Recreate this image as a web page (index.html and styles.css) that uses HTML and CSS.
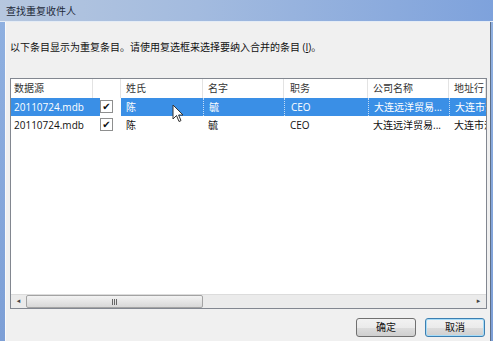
FILE: index.html
```html
<!DOCTYPE html>
<html>
  <head>
    <meta charset="utf-8" />
    <title>查找重复收件人</title>
    <link rel="stylesheet" href="styles.css">
  </head>

  <body>
    <div class="window">
      <div class="titlebar">查找重复收件人</div>
      <div class="frame">
        <div class="dialog">
          <p class="hint">以下条目显示为重复条目。请使用复选框来选择要纳入合并的条目 (<u>I</u>)。</p>

          <div class="list">
            <div class="row head">
              <div class="cell c-src">数据源</div>
              <div class="cell c-chk"></div>
              <div class="cell c-name">姓氏</div>
              <div class="cell c-first">名字</div>
              <div class="cell c-job">职务</div>
              <div class="cell c-co">公司名称</div>
              <div class="cell c-addr">地址行</div>
            </div>
            <div class="row selected">
              <div class="cell c-src">20110724.mdb</div>
              <div class="cell c-chk"><span class="check">&#10004;</span></div>
              <div class="cell c-name">陈</div>
              <div class="cell c-first">毓</div>
              <div class="cell c-job">CEO</div>
              <div class="cell c-co">大连远洋贸易...</div>
              <div class="cell c-addr">大连市沙</div>
              <svg class="cursor" width="12" height="19" viewBox="0 0 12 19">
                <path d="M1 1 L1 15 L4.5 11.5 L7 17.5 L9 16.6 L6.6 11 L11 11 Z" fill="#fff" stroke="#333" stroke-width="1"/>
              </svg>
            </div>
            <div class="row">
              <div class="cell c-src">20110724.mdb</div>
              <div class="cell c-chk"><span class="check">&#10004;</span></div>
              <div class="cell c-name">陈</div>
              <div class="cell c-first">毓</div>
              <div class="cell c-job">CEO</div>
              <div class="cell c-co">大连远洋贸易...</div>
              <div class="cell c-addr">大连市沙</div>
            </div>
            <div class="filler"></div>
            <div class="hscroll">
              <div class="arrow">&#9666;</div>
              <div class="track">
                <div class="thumb"><span class="grip"></span></div>
              </div>
              <div class="arrow">&#9656;</div>
            </div>
          </div>

          <div class="buttons">
            <button class="btn">确定</button>
            <button class="btn focus">取消</button>
          </div>
        </div>
      </div>
    </div>
  </body>
</html>
```

FILE: styles.css
```css
* {
  font-family: 'Open Sans', 'Noto Sans CJK SC', sans-serif;
  box-sizing: border-box;
}

html,
body {
  margin: 0;
  padding: 0;
  overflow: hidden;
  background-color: #f0f0f0;
}

.window {
  width: 493px;
  height: 341px;
  display: flex;
  flex-direction: column;
}

.titlebar {
  height: 22px;
  padding: 4px 0 0 6px;
  font-size: 10px;
  line-height: 14px;
  color: #1e2a3a;
  background: linear-gradient(to right, #b6c7df 0%, #a3bbdf 40%, #7ea2dc 100%);
  border-bottom: 1px solid #e4ecf6;
}

.frame {
  flex: 1;
  min-height: 0;
  display: flex;
  padding: 0 2px 0 5px;
  background: linear-gradient(#8fb0e0, #7d9fd6);
}

.dialog {
  flex: 1;
  min-width: 0;
  display: flex;
  flex-direction: column;
  background-color: #f0f0f0;
  border-left: 1px solid #fafafa;
  border-right: 1px solid #5d6e88;
  padding: 0 3px 0 4px;
}

.hint {
  margin: 18px 0 0 0;
  height: 14px;
  font-size: 10px;
  line-height: 14px;
  color: #111;
  white-space: nowrap;
}

.list {
  margin-top: 24px;
  height: 231px;
  min-width: 0;
  display: flex;
  flex-direction: column;
  background-color: #fff;
  border: 1px solid #828790;
  overflow: hidden;
}

.row {
  position: relative;
  display: flex;
  height: 18px;
  font-size: 10px;
  line-height: 18px;
  color: #111;
  white-space: nowrap;
}

.row.head {
  height: 19px;
  color: #333;
}

.row.head .cell {
  border-right: 1px solid #e3e3e3;
}

.row.selected {
  background-color: #3a8fe6;
  color: #fff;
}

.row.selected .cell {
  border-left: 1px dotted #c4dcf6;
}

.row.selected .cell.c-src,
.row.selected .cell.c-chk,
.row.selected .cell.c-name {
  border-left: 0;
}

.cell {
  overflow: hidden;
  flex-shrink: 0;
  padding-left: 5px;
}

.c-src { width: 82px; padding-left: 3px; }
.c-chk { width: 28px; padding-left: 7px; }
.c-name { width: 82px; }
.c-first { width: 81px; }
.c-job { width: 84px; padding-left: 6px; }
.c-co { width: 81px; }
.c-addr { flex: 1; flex-shrink: 1; }

.row.selected .c-chk {
  background: linear-gradient(to right, #3a8fe6 7px, #fff 7px);
}

.row.selected .c-name {
  border-left: 1px solid #fff;
}

.check {
  display: inline-block;
  width: 13px;
  height: 13px;
  margin-top: 2px;
  border: 1px solid #8e8f8f;
  background-color: #fff;
  color: #111;
  font-family: 'DejaVu Sans', sans-serif;
  font-size: 10px;
  line-height: 11px;
  text-align: center;
  vertical-align: top;
}

.cursor {
  position: absolute;
  left: 161px;
  top: 6px;
  z-index: 2;
}

.filler {
  flex: 1;
}

.hscroll {
  height: 14px;
  display: flex;
  background-color: #ebebeb;
  border-top: 1px solid #dcdcdc;
}

.arrow {
  width: 15px;
  font-size: 7px;
  line-height: 13px;
  text-align: center;
  color: #444;
  font-family: 'DejaVu Sans', sans-serif;
}

.track {
  flex: 1;
  display: flex;
}

.thumb {
  width: 177px;
  height: 13px;
  border: 1px solid #a3a3a3;
  border-radius: 2px;
  background: linear-gradient(#f3f3f3, #d8d8d8);
  display: flex;
  justify-content: center;
  align-items: center;
}

.grip {
  width: 5px;
  height: 6px;
  border-left: 1px solid #666;
  border-right: 1px solid #666;
  position: relative;
}

.grip::after {
  content: '';
  position: absolute;
  left: 1px;
  top: 0;
  width: 1px;
  height: 6px;
  background-color: #666;
}

.buttons {
  display: flex;
  justify-content: flex-end;
  gap: 9px;
  margin-top: 9px;
  padding-right: 2px;
}

.btn {
  width: 60px;
  height: 19px;
  padding: 0;
  font-size: 10px;
  line-height: 17px;
  color: #111;
  border: 1px solid #707070;
  border-radius: 3px;
  background: linear-gradient(#f2f2f2 0%, #ebebeb 50%, #dddddd 51%, #cfcfcf 100%);
}

.btn.focus {
  border-color: #3c7fb1;
  box-shadow: inset 0 0 0 1px #a6dcf8;
}
```
